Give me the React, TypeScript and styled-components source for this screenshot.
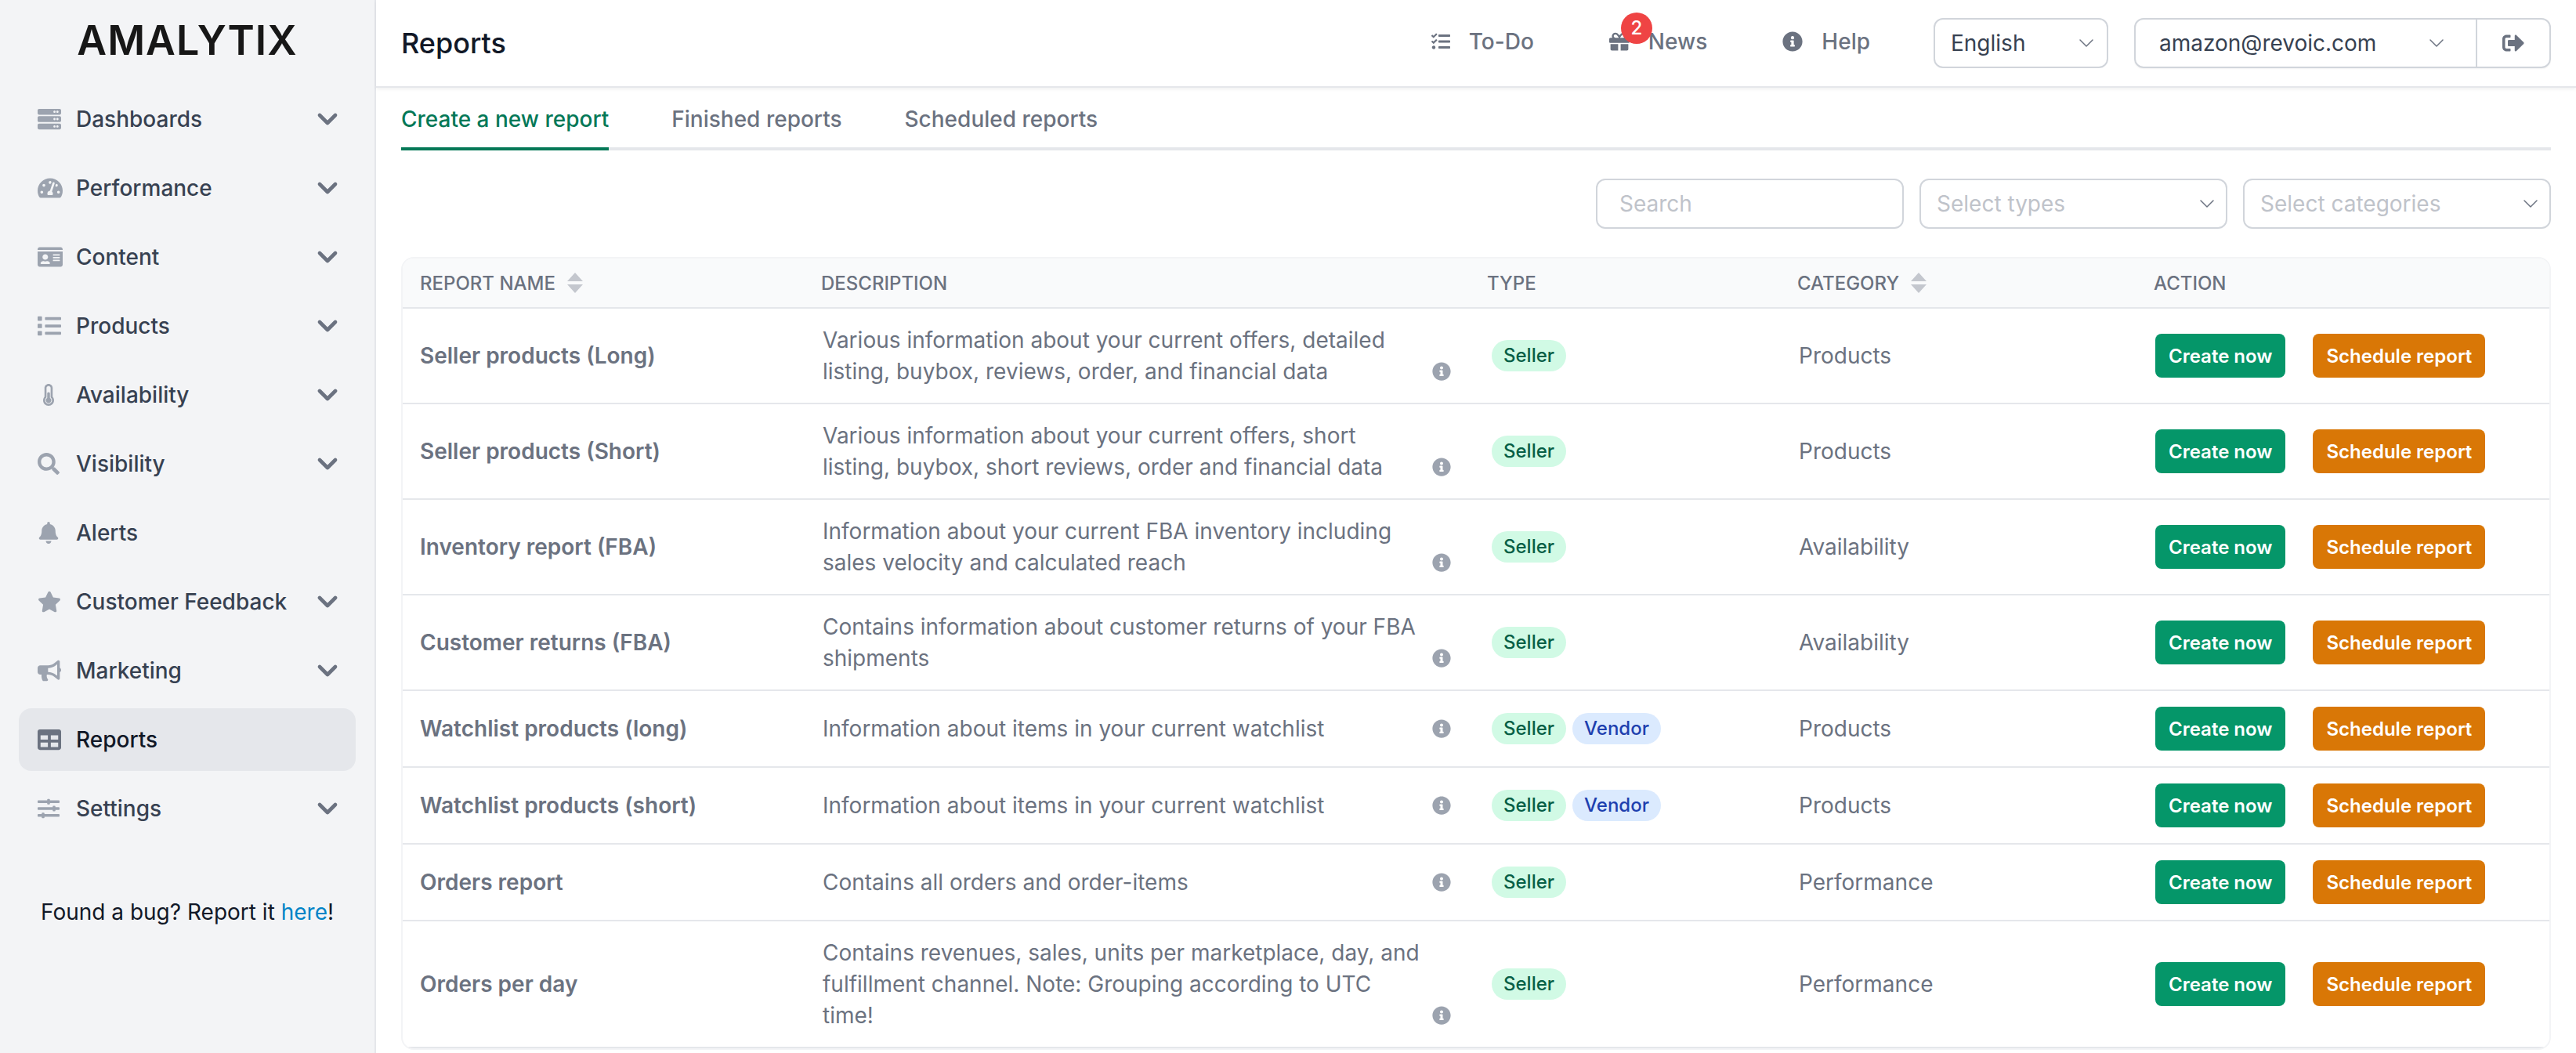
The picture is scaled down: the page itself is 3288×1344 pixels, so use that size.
import { ReactNode } from 'react';
import styled, { createGlobalStyle } from 'styled-components';
import { ChevronDown } from 'lucide-react';
import {
    FaBell,
    FaBullhorn,
    FaGift,
    FaIdCard,
    FaInfoCircle,
    FaList,
    FaSearch,
    FaServer,
    FaSignOutAlt,
    FaSlidersH,
    FaStar,
    FaTable,
    FaTachometerAlt,
    FaTasks,
    FaThermometerHalf,
} from 'react-icons/fa';

type NavEntry = {
    label: string;
    icon: ReactNode;
    active?: boolean;
    noChevron?: boolean;
};

type Report = {
    name: string;
    description: string;
    vendor?: boolean;
    category: string;
};

const navEntries: NavEntry[] = [
    { label: 'Dashboards', icon: <FaServer size={30} /> },
    { label: 'Performance', icon: <FaTachometerAlt size={32} /> },
    { label: 'Content', icon: <FaIdCard size={32} /> },
    { label: 'Products', icon: <FaList size={30} /> },
    { label: 'Availability', icon: <FaThermometerHalf size={28} /> },
    { label: 'Visibility', icon: <FaSearch size={28} /> },
    { label: 'Alerts', icon: <FaBell size={28} />, noChevron: true },
    { label: 'Customer Feedback', icon: <FaStar size={30} /> },
    { label: 'Marketing', icon: <FaBullhorn size={30} /> },
    { label: 'Reports', icon: <FaTable size={30} />, active: true, noChevron: true },
    { label: 'Settings', icon: <FaSlidersH size={28} /> },
];

const reports: Report[] = [
    {
        name: 'Seller products (Long)',
        description:
            'Various information about your current offers, detailed listing, buybox, reviews, order, and financial data',
        category: 'Products',
    },
    {
        name: 'Seller products (Short)',
        description:
            'Various information about your current offers, short listing, buybox, short reviews, order and financial data',
        category: 'Products',
    },
    {
        name: 'Inventory report (FBA)',
        description:
            'Information about your current FBA inventory including sales velocity and calculated reach',
        category: 'Availability',
    },
    {
        name: 'Customer returns (FBA)',
        description: 'Contains information about customer returns of your FBA shipments',
        category: 'Availability',
    },
    {
        name: 'Watchlist products (long)',
        description: 'Information about items in your current watchlist',
        vendor: true,
        category: 'Products',
    },
    {
        name: 'Watchlist products (short)',
        description: 'Information about items in your current watchlist',
        vendor: true,
        category: 'Products',
    },
    {
        name: 'Orders report',
        description: 'Contains all orders and order-items',
        category: 'Performance',
    },
    {
        name: 'Orders per day',
        description:
            'Contains revenues, sales, units per marketplace, day, and fulfillment channel. Note: Grouping according to UTC time!',
        category: 'Performance',
    },
];

const SortArrows = () => (
    <SortIcon width="22" height="26" viewBox="0 0 22 26">
        <path d="M11 0 L21 11 H1 Z M11 26 L1 15 H21 Z" fill="#c4c7ce" />
    </SortIcon>
);

export default function App() {
    return (
        <Page>
            <GlobalStyle />
            <Sidebar>
                <Logo>AMALYTIX</Logo>
                <Nav>
                    {navEntries.map((entry) => (
                        <NavItem key={entry.label} $active={entry.active}>
                            <NavIcon $active={entry.active}>{entry.icon}</NavIcon>
                            <NavLabel>{entry.label}</NavLabel>
                            {!entry.noChevron && (
                                <NavChevron>
                                    <ChevronDown size={40} strokeWidth={2.8} />
                                </NavChevron>
                            )}
                        </NavItem>
                    ))}
                </Nav>
                <BugNote>
                    Found a bug? Report it <BugLink href="#">here</BugLink>!
                </BugNote>
            </Sidebar>
            <Main>
                <TopBar>
                    <PageTitle>Reports</PageTitle>
                    <TopLinks>
                        <TopLink>
                            <FaTasks size={24} />
                            To-Do
                        </TopLink>
                        <TopLink>
                            <FaGift size={26} />
                            <NewsBadge>2</NewsBadge>
                            News
                        </TopLink>
                        <TopLink>
                            <FaInfoCircle size={26} />
                            Help
                        </TopLink>
                    </TopLinks>
                    <LanguageSelect>
                        English
                        <ThinChevron size={32} strokeWidth={1.1} />
                    </LanguageSelect>
                    <AccountGroup>
                        <AccountSelect>
                            amazon@revoic.com
                            <ThinChevron size={32} strokeWidth={1.1} />
                        </AccountSelect>
                        <LogoutButton>
                            <FaSignOutAlt size={28} />
                        </LogoutButton>
                    </AccountGroup>
                </TopBar>
                <Content>
                    <Tabs>
                        <Tab $active>Create a new report</Tab>
                        <Tab>Finished reports</Tab>
                        <Tab>Scheduled reports</Tab>
                    </Tabs>
                    <Filters>
                        <SearchInput placeholder="Search" />
                        <FilterSelect>
                            Select types
                            <ThinChevron size={32} strokeWidth={1.1} />
                        </FilterSelect>
                        <FilterSelect>
                            Select categories
                            <ThinChevron size={32} strokeWidth={1.1} />
                        </FilterSelect>
                    </Filters>
                    <TableFrame>
                        <Table>
                            <colgroup>
                                <col style={{ width: 512 }} />
                                <col style={{ width: 850 }} />
                                <col style={{ width: 396 }} />
                                <col style={{ width: 455 }} />
                                <col />
                            </colgroup>
                            <thead>
                                <tr>
                                    <HeadCell>
                                        <HeadInner>
                                            Report name
                                            <SortArrows />
                                        </HeadInner>
                                    </HeadCell>
                                    <HeadCell>Description</HeadCell>
                                    <HeadCell>Type</HeadCell>
                                    <HeadCell>
                                        <HeadInner>
                                            Category
                                            <SortArrows />
                                        </HeadInner>
                                    </HeadCell>
                                    <HeadCell>Action</HeadCell>
                                </tr>
                            </thead>
                            <tbody>
                                {reports.map((report) => (
                                    <tr key={report.name}>
                                        <NameCell>{report.name}</NameCell>
                                        <BodyCell>
                                            <DescriptionWrap>
                                                <DescriptionText>{report.description}</DescriptionText>
                                                <InfoIcon>
                                                    <FaInfoCircle size={24} />
                                                </InfoIcon>
                                            </DescriptionWrap>
                                        </BodyCell>
                                        <BodyCell>
                                            <Badges>
                                                <Badge>Seller</Badge>
                                                {report.vendor && <Badge $vendor>Vendor</Badge>}
                                            </Badges>
                                        </BodyCell>
                                        <BodyCell>{report.category}</BodyCell>
                                        <BodyCell>
                                            <Actions>
                                                <ActionButton>Create now</ActionButton>
                                                <ActionButton $schedule>Schedule report</ActionButton>
                                            </Actions>
                                        </BodyCell>
                                    </tr>
                                ))}
                            </tbody>
                        </Table>
                    </TableFrame>
                </Content>
            </Main>
        </Page>
    );
}

const GlobalStyle = createGlobalStyle`
    html, body {
        margin: 0;
        height: 1344px;
        overflow: hidden;
        background: #ffffff;
    }
    * {
        box-sizing: border-box;
    }
    body {
        font-family: Inter, "Liberation Sans", sans-serif;
    }
`;

const Page = styled.div`
    display: flex;
    width: 3288px;
    height: 1344px;
    overflow: hidden;
`;

const Sidebar = styled.aside`
    flex: 0 0 480px;
    background: #f3f4f6;
    border-right: 2px solid #e5e7eb;
`;

const Logo = styled.div`
    height: 112px;
    padding-top: 15px;
    text-align: center;
    font-family: Inter, sans-serif;
    font-size: 52px;
    line-height: 74px;
    font-weight: 600;
    letter-spacing: 1px;
    color: #171717;
`;

const Nav = styled.nav`
    display: flex;
    flex-direction: column;
    gap: 8px;
    padding: 0 24px;
`;

const NavItem = styled.div<{ $active?: boolean }>`
    display: flex;
    align-items: center;
    height: 80px;
    padding: 0 16px 0 24px;
    border-radius: 16px;
    font-size: 28px;
    font-weight: 500;
    color: ${({ $active }) => ($active ? '#111827' : '#374151')};
    background: ${({ $active }) => ($active ? '#e5e7eb' : 'transparent')};
`;

const NavIcon = styled.span<{ $active?: boolean }>`
    display: flex;
    flex: 0 0 49px;
    color: ${({ $active }) => ($active ? '#6b7280' : '#9ca3af')};
`;

const NavLabel = styled.span`
    flex: 1;
`;

const NavChevron = styled.span`
    display: flex;
    color: #6b7280;
`;

const BugNote = styled.p`
    margin: 72px 0 0;
    text-align: center;
    font-size: 28px;
    line-height: 40px;
    color: #111827;
`;

const BugLink = styled.a`
    color: #0284c7;
    text-decoration: none;
`;

const Main = styled.main`
    flex: 1;
    min-width: 0;
`;

const TopBar = styled.header`
    display: flex;
    align-items: center;
    height: 112px;
    padding: 0 32px;
    border-bottom: 2px solid #e5e7eb;
    box-shadow: 0 2px 4px rgba(0, 0, 0, 0.06);
`;

const PageTitle = styled.h1`
    margin: 0 auto 0 0;
    font-size: 36px;
    line-height: 56px;
    font-weight: 500;
    color: #111827;
`;

const TopLinks = styled.div`
    display: flex;
    align-items: center;
    gap: 96px;
    margin-right: 81px;
    margin-bottom: 4px;
`;

const TopLink = styled.a`
    position: relative;
    display: flex;
    align-items: center;
    gap: 24px;
    font-size: 28px;
    font-weight: 500;
    color: #6b7280;
`;

const NewsBadge = styled.span`
    position: absolute;
    top: -20px;
    left: 15px;
    width: 40px;
    height: 40px;
    border-radius: 50%;
    background: #ef4444;
    color: #ffffff;
    font-size: 24px;
    font-weight: 500;
    line-height: 40px;
    text-align: center;
`;

const ThinChevron = styled(ChevronDown)`
    flex: none;
    color: #6b7280;
`;

const LanguageSelect = styled.div`
    display: flex;
    align-items: center;
    justify-content: space-between;
    width: 223px;
    height: 64px;
    margin-right: 33px;
    padding: 0 10px 0 20px;
    border: 2px solid #d1d5db;
    border-radius: 12px;
    font-size: 28px;
    color: #374151;
`;

const AccountGroup = styled.div`
    display: flex;
    width: 532px;
    height: 64px;
    border: 2px solid #d1d5db;
    border-radius: 12px;
    box-shadow: 0 1px 2px rgba(0, 0, 0, 0.05);
`;

const AccountSelect = styled.div`
    display: flex;
    flex: 1;
    align-items: center;
    justify-content: space-between;
    padding: 0 34px 0 30px;
    border-right: 2px solid #d1d5db;
    font-size: 28px;
    color: #374151;
`;

const LogoutButton = styled.div`
    display: flex;
    flex: 0 0 92px;
    align-items: center;
    justify-content: center;
    color: #6b7280;
`;

const Content = styled.div`
    padding: 0 32px;
`;

const Tabs = styled.div`
    display: flex;
    gap: 80px;
    height: 80px;
    border-bottom: 4px solid #e5e7eb;
`;

const Tab = styled.div<{ $active?: boolean }>`
    height: 80px;
    padding-top: 20px;
    font-size: 28px;
    line-height: 40px;
    font-weight: 500;
    color: ${({ $active }) => ($active ? '#047857' : '#6b7280')};
    border-bottom: 4px solid ${({ $active }) => ($active ? '#047857' : 'transparent')};
`;

const Filters = styled.div`
    display: flex;
    justify-content: flex-end;
    gap: 20px;
    margin-top: 36px;
`;

const SearchInput = styled.input`
    width: 393px;
    height: 64px;
    padding: 0 28px;
    border: 2px solid #d1d5db;
    border-radius: 12px;
    font-family: inherit;
    font-size: 28px;
    outline: none;

    &::placeholder {
        color: #bfc3ca;
    }
`;

const FilterSelect = styled.div`
    display: flex;
    align-items: center;
    justify-content: space-between;
    width: 393px;
    height: 64px;
    padding: 0 8px 0 20px;
    border: 2px solid #d1d5db;
    border-radius: 12px;
    font-size: 28px;
    color: #bfc3ca;
`;

const TableFrame = styled.div`
    margin-top: 36px;
    border: 2px solid #f3f4f6;
    border-radius: 16px;
    overflow: hidden;
`;

const Table = styled.table`
    width: 100%;
    table-layout: fixed;
    border-collapse: separate;
    border-spacing: 0;
`;

const HeadCell = styled.th`
    height: 64px;
    padding: 0 22px;
    background: #f9fafb;
    border-bottom: 2px solid #e5e7eb;
    text-align: left;
    font-size: 24px;
    font-weight: 500;
    text-transform: uppercase;
    color: #6b7280;
`;

const HeadInner = styled.div`
    display: flex;
    align-items: center;
    gap: 14px;
`;

const SortIcon = styled.svg`
    flex: none;
`;

const BodyCell = styled.td`
    padding: 20px 24px;
    border-bottom: 2px solid #e5e7eb;
    font-size: 28px;
    line-height: 40px;
    color: #6b7280;
`;

const NameCell = styled(BodyCell)`
    padding-left: 22px;
    font-weight: 600;
`;

const DescriptionWrap = styled.div`
    display: flex;
    align-items: flex-end;
`;

const DescriptionText = styled.div`
    flex: 1;
    padding-right: 14px;
`;

const InfoIcon = styled.span`
    display: flex;
    flex: none;
    margin-bottom: 8px;
    color: #9ca3af;
`;

const Badges = styled.div`
    display: flex;
    gap: 8px;
    padding-left: 4px;
`;

const Badge = styled.span<{ $vendor?: boolean }>`
    height: 40px;
    padding: 0 15px;
    border-radius: 20px;
    font-size: 24px;
    line-height: 40px;
    font-weight: 500;
    color: ${({ $vendor }) => ($vendor ? '#1e40af' : '#065f46')};
    background: ${({ $vendor }) => ($vendor ? '#dbeafe' : '#d1fae5')};
`;

const Actions = styled.div`
    display: flex;
    gap: 35px;
`;

const ActionButton = styled.button<{ $schedule?: boolean }>`
    height: 56px;
    padding: 0 17px;
    border: none;
    border-radius: 8px;
    font-family: inherit;
    font-size: 24px;
    font-weight: 600;
    color: #ffffff;
    background: ${({ $schedule }) => ($schedule ? '#d97706' : '#059669')};
`;
